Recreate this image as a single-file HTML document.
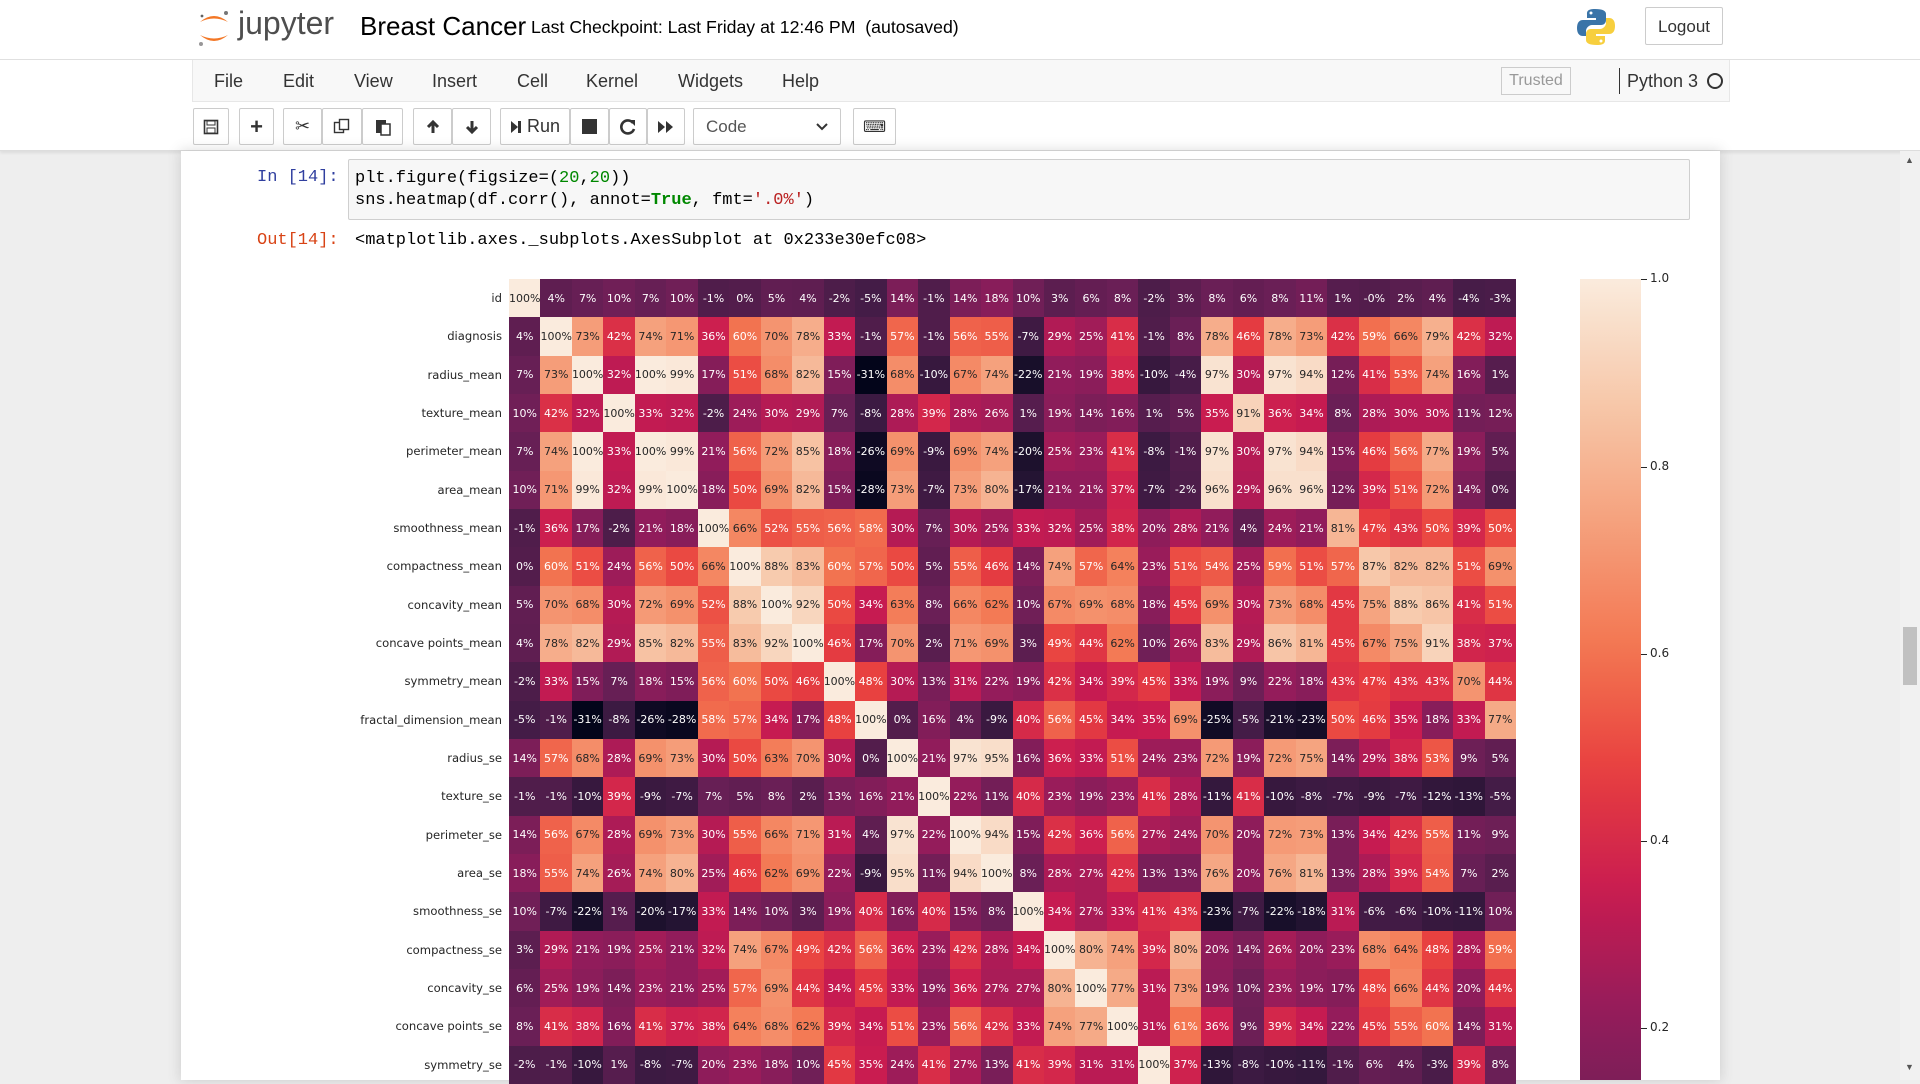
<!DOCTYPE html>
<html><head><meta charset="utf-8"><style>
*{box-sizing:border-box}
body{margin:0;width:1920px;height:1080px;overflow:hidden;background:#eee;font-family:"Liberation Sans",sans-serif;position:relative}
#hdr{position:absolute;left:0;top:0;width:1920px;height:60px;background:#fff;border-bottom:1px solid #e0e0e0}
#menu{position:absolute;left:0;top:60px;width:1920px;height:91px;background:#fff;border-bottom:1px solid #ddd;box-shadow:0 2px 3px rgba(0,0,0,.08)}
#mb{position:absolute;left:192px;top:0;width:1538px;height:42px;background:#f8f8f8;border:1px solid #e7e7e7;border-top:none}
#mb span{position:absolute;top:11px;font-size:18px;color:#333}
.b{position:absolute;top:48px;height:37px;border:1px solid #ccc;border-radius:2px;background:#fff;display:flex;align-items:center;justify-content:center;font-size:18px;color:#333}
#page{position:absolute;left:181px;top:151px;width:1539px;height:929px;background:#fff;box-shadow:0 0 12px 1px rgba(87,87,87,.2)}
.mono{font-family:"Liberation Mono",monospace;font-size:17px}
#hm{position:absolute;left:509px;top:279px;border-collapse:collapse;table-layout:fixed}
#hm td{width:31.47px;height:38.33px;padding:0;text-align:center;font-size:11px;font-family:"DejaVu Sans",sans-serif;white-space:nowrap;overflow:hidden}
#lab{position:absolute;left:300px;top:279px;width:202px;text-align:right;font-family:"DejaVu Sans",sans-serif;font-size:11.6px;color:#262626}
#lab div{height:38.33px;line-height:38.33px}
.tk{position:absolute;left:1641px;width:6px;height:1px;background:#262626}
.tl{position:absolute;left:1650px;font-family:"DejaVu Sans",sans-serif;font-size:12px;color:#262626}
</style></head><body>
<div id="hdr">
<svg style="position:absolute;left:196px;top:8px" width="36" height="40" viewBox="0 0 36 40"><path d="M4 14 Q18 2 32 14 Q18 7 4 14Z" fill="#f37726"/><path d="M4 27 Q18 39 32 27 Q18 34 4 27Z" fill="#f37726"/><circle cx="30" cy="5" r="2" fill="#767677"/><circle cx="5" cy="36" r="2" fill="#989798"/><circle cx="6" cy="8" r="1.4" fill="#616262"/></svg>
<div style="position:absolute;left:238px;top:5px;font-size:32px;color:#4e4e4e">jupyter</div>
<div style="position:absolute;left:360px;top:11px;font-size:26px;color:#000">Breast Cancer</div>
<div style="position:absolute;left:531px;top:17px;font-size:17.7px;color:#000">Last Checkpoint: Last Friday at 12:46 PM &nbsp;(autosaved)</div>
<svg style="position:absolute;left:1576px;top:7px" width="40" height="40" viewBox="0 0 40 40"><path d="M19 2c-8 0-8 3-8 5v4h9v2H7c-4 0-6 3-6 8s2 8 6 8h3v-5c0-3 3-6 6-6h9c3 0 5-2 5-5V7c0-3-3-5-11-5z" fill="#3a74a8"/><circle cx="15" cy="6" r="1.5" fill="#fff"/><path d="M21 38c8 0 8-3 8-5v-4h-9v-2h13c4 0 6-3 6-8s-2-8-6-8h-3v5c0 3-3 6-6 6h-9c-3 0-5 2-5 5v6c0 3 3 5 11 5z" fill="#f7cf3e"/><circle cx="25" cy="34" r="1.5" fill="#fff"/></svg>
<div style="position:absolute;left:1645px;top:7px;width:78px;height:38px;border:1px solid #ccc;border-radius:2px;font-size:17px;line-height:38px;text-align:center;color:#333">Logout</div>
</div>
<div id="menu">
<div id="mb"><span style="left:21px">File</span><span style="left:90px">Edit</span><span style="left:161px">View</span><span style="left:239px">Insert</span><span style="left:324px">Cell</span><span style="left:393px">Kernel</span><span style="left:485px">Widgets</span><span style="left:589px">Help</span>
<div style="position:absolute;left:1308px;top:7px;width:70px;height:28px;border:1px solid #ccc;font-size:16px;color:#999;text-align:center;line-height:26px">Trusted</div>
<div style="position:absolute;left:1426px;top:8px;width:1px;height:26px;background:#333"></div>
<span style="left:1434px">Python 3</span>
<div style="position:absolute;left:1514px;top:13px;width:16px;height:16px;border:2px solid #333;border-radius:50%"></div></div>
<div class="b" style="left:193px;width:36px"><svg width="16" height="16"><rect x="1.5" y="1.5" width="13" height="13" fill="none" stroke="#333" stroke-width="1.6"/><rect x="4" y="2" width="8" height="4" fill="none" stroke="#333"/><rect x="4" y="9" width="8" height="5" fill="none" stroke="#333"/></svg></div>
<div class="b" style="left:239px;width:35px;font-weight:bold;font-size:22px">+</div>
<div class="b" style="left:283px;width:39px;font-size:18px">✂</div>
<div class="b" style="left:322px;width:40px"><svg width="18" height="18"><rect x="1.5" y="4.5" width="9" height="10" fill="#fff" stroke="#333" stroke-width="1.4"/><rect x="6.5" y="1.5" width="9" height="10" fill="#fff" stroke="#333" stroke-width="1.4"/></svg></div>
<div class="b" style="left:362px;width:41px"><svg width="16" height="18"><rect x="1" y="2" width="10" height="13" fill="#333"/><rect x="6" y="6" width="9" height="11" fill="#fff" stroke="#333" stroke-width="1.5"/></svg></div>
<div class="b" style="left:413px;width:39px"><svg width="16" height="16"><path d="M8 14V3M3 8l5-5 5 5" stroke="#333" stroke-width="3" fill="none"/></svg></div>
<div class="b" style="left:452px;width:39px"><svg width="16" height="16"><path d="M8 2v11M3 8l5 5 5-5" stroke="#333" stroke-width="3" fill="none"/></svg></div>
<div class="b" style="left:500px;width:70px"><svg width="12" height="14"><path d="M1 1l7 6-7 6z" fill="#333"/><rect x="8" y="1" width="3" height="12" fill="#333"/></svg>&nbsp;Run</div>
<div class="b" style="left:570px;width:39px"><div style="width:15px;height:15px;background:#333"></div></div>
<div class="b" style="left:609px;width:38px"><svg width="18" height="18"><path d="M14 5A6.5 6.5 0 1 0 15 11" stroke="#333" stroke-width="2.6" fill="none"/><path d="M10 2h6v6z" fill="#333"/></svg></div>
<div class="b" style="left:647px;width:38px"><svg width="18" height="14"><path d="M1 1l7 6-7 6zM9 1l7 6-7 6z" fill="#333"/></svg></div>
<div class="b" style="left:693px;width:148px;justify-content:space-between;padding:0 12px;font-size:17px;color:#555">Code<svg width="12" height="8"><path d="M1 1l5 5 5-5" stroke="#333" stroke-width="2" fill="none"/></svg></div>
<div class="b" style="left:853px;width:43px;font-size:16px">⌨</div>
</div>
<div id="page"></div>
<div style="position:absolute;left:1900px;top:151px;width:20px;height:929px;background:#f1f1f1"></div>
<div style="position:absolute;left:1903px;top:627px;width:14px;height:58px;background:#c1c1c1"></div>
<div style="position:absolute;left:1905px;top:155px;font-size:9px;color:#555">▲</div>
<div style="position:absolute;left:1905px;top:1062px;font-size:9px;color:#555">▼</div>
<div class="mono" style="position:absolute;left:257px;top:168px;color:#303f9f">In [14]:</div>
<div style="position:absolute;left:348px;top:159px;width:1342px;height:61px;background:#f7f7f7;border:1px solid #cfcfcf;border-radius:2px"></div>
<div class="mono" style="position:absolute;left:355px;top:168px;line-height:22px;color:#000;white-space:pre">plt.figure(figsize=(<span style="color:#080">20</span>,<span style="color:#080">20</span>))
sns.heatmap(df.corr(), annot=<b style="color:#080">True</b>, fmt=<span style="color:#ba2121">'.0%'</span>)</div>
<div class="mono" style="position:absolute;left:257px;top:231px;color:#d84315">Out[14]:</div>
<div class="mono" style="position:absolute;left:355px;top:231px;color:#000">&lt;matplotlib.axes._subplots.AxesSubplot at 0x233e30efc08&gt;</div>
<div id="lab"><div>id</div><div>diagnosis</div><div>radius_mean</div><div>texture_mean</div><div>perimeter_mean</div><div>area_mean</div><div>smoothness_mean</div><div>compactness_mean</div><div>concavity_mean</div><div>concave points_mean</div><div>symmetry_mean</div><div>fractal_dimension_mean</div><div>radius_se</div><div>texture_se</div><div>perimeter_se</div><div>area_se</div><div>smoothness_se</div><div>compactness_se</div><div>concavity_se</div><div>concave points_se</div><div>symmetry_se</div></div>
<table id="hm">
<tr><td>100%</td><td>4%</td><td>7%</td><td>10%</td><td>7%</td><td>10%</td><td>-1%</td><td>0%</td><td>5%</td><td>4%</td><td>-2%</td><td>-5%</td><td>14%</td><td>-1%</td><td>14%</td><td>18%</td><td>10%</td><td>3%</td><td>6%</td><td>8%</td><td>-2%</td><td>3%</td><td>8%</td><td>6%</td><td>8%</td><td>11%</td><td>1%</td><td>-0%</td><td>2%</td><td>4%</td><td>-4%</td><td>-3%</td></tr>
<tr><td>4%</td><td>100%</td><td>73%</td><td>42%</td><td>74%</td><td>71%</td><td>36%</td><td>60%</td><td>70%</td><td>78%</td><td>33%</td><td>-1%</td><td>57%</td><td>-1%</td><td>56%</td><td>55%</td><td>-7%</td><td>29%</td><td>25%</td><td>41%</td><td>-1%</td><td>8%</td><td>78%</td><td>46%</td><td>78%</td><td>73%</td><td>42%</td><td>59%</td><td>66%</td><td>79%</td><td>42%</td><td>32%</td></tr>
<tr><td>7%</td><td>73%</td><td>100%</td><td>32%</td><td>100%</td><td>99%</td><td>17%</td><td>51%</td><td>68%</td><td>82%</td><td>15%</td><td>-31%</td><td>68%</td><td>-10%</td><td>67%</td><td>74%</td><td>-22%</td><td>21%</td><td>19%</td><td>38%</td><td>-10%</td><td>-4%</td><td>97%</td><td>30%</td><td>97%</td><td>94%</td><td>12%</td><td>41%</td><td>53%</td><td>74%</td><td>16%</td><td>1%</td></tr>
<tr><td>10%</td><td>42%</td><td>32%</td><td>100%</td><td>33%</td><td>32%</td><td>-2%</td><td>24%</td><td>30%</td><td>29%</td><td>7%</td><td>-8%</td><td>28%</td><td>39%</td><td>28%</td><td>26%</td><td>1%</td><td>19%</td><td>14%</td><td>16%</td><td>1%</td><td>5%</td><td>35%</td><td>91%</td><td>36%</td><td>34%</td><td>8%</td><td>28%</td><td>30%</td><td>30%</td><td>11%</td><td>12%</td></tr>
<tr><td>7%</td><td>74%</td><td>100%</td><td>33%</td><td>100%</td><td>99%</td><td>21%</td><td>56%</td><td>72%</td><td>85%</td><td>18%</td><td>-26%</td><td>69%</td><td>-9%</td><td>69%</td><td>74%</td><td>-20%</td><td>25%</td><td>23%</td><td>41%</td><td>-8%</td><td>-1%</td><td>97%</td><td>30%</td><td>97%</td><td>94%</td><td>15%</td><td>46%</td><td>56%</td><td>77%</td><td>19%</td><td>5%</td></tr>
<tr><td>10%</td><td>71%</td><td>99%</td><td>32%</td><td>99%</td><td>100%</td><td>18%</td><td>50%</td><td>69%</td><td>82%</td><td>15%</td><td>-28%</td><td>73%</td><td>-7%</td><td>73%</td><td>80%</td><td>-17%</td><td>21%</td><td>21%</td><td>37%</td><td>-7%</td><td>-2%</td><td>96%</td><td>29%</td><td>96%</td><td>96%</td><td>12%</td><td>39%</td><td>51%</td><td>72%</td><td>14%</td><td>0%</td></tr>
<tr><td>-1%</td><td>36%</td><td>17%</td><td>-2%</td><td>21%</td><td>18%</td><td>100%</td><td>66%</td><td>52%</td><td>55%</td><td>56%</td><td>58%</td><td>30%</td><td>7%</td><td>30%</td><td>25%</td><td>33%</td><td>32%</td><td>25%</td><td>38%</td><td>20%</td><td>28%</td><td>21%</td><td>4%</td><td>24%</td><td>21%</td><td>81%</td><td>47%</td><td>43%</td><td>50%</td><td>39%</td><td>50%</td></tr>
<tr><td>0%</td><td>60%</td><td>51%</td><td>24%</td><td>56%</td><td>50%</td><td>66%</td><td>100%</td><td>88%</td><td>83%</td><td>60%</td><td>57%</td><td>50%</td><td>5%</td><td>55%</td><td>46%</td><td>14%</td><td>74%</td><td>57%</td><td>64%</td><td>23%</td><td>51%</td><td>54%</td><td>25%</td><td>59%</td><td>51%</td><td>57%</td><td>87%</td><td>82%</td><td>82%</td><td>51%</td><td>69%</td></tr>
<tr><td>5%</td><td>70%</td><td>68%</td><td>30%</td><td>72%</td><td>69%</td><td>52%</td><td>88%</td><td>100%</td><td>92%</td><td>50%</td><td>34%</td><td>63%</td><td>8%</td><td>66%</td><td>62%</td><td>10%</td><td>67%</td><td>69%</td><td>68%</td><td>18%</td><td>45%</td><td>69%</td><td>30%</td><td>73%</td><td>68%</td><td>45%</td><td>75%</td><td>88%</td><td>86%</td><td>41%</td><td>51%</td></tr>
<tr><td>4%</td><td>78%</td><td>82%</td><td>29%</td><td>85%</td><td>82%</td><td>55%</td><td>83%</td><td>92%</td><td>100%</td><td>46%</td><td>17%</td><td>70%</td><td>2%</td><td>71%</td><td>69%</td><td>3%</td><td>49%</td><td>44%</td><td>62%</td><td>10%</td><td>26%</td><td>83%</td><td>29%</td><td>86%</td><td>81%</td><td>45%</td><td>67%</td><td>75%</td><td>91%</td><td>38%</td><td>37%</td></tr>
<tr><td>-2%</td><td>33%</td><td>15%</td><td>7%</td><td>18%</td><td>15%</td><td>56%</td><td>60%</td><td>50%</td><td>46%</td><td>100%</td><td>48%</td><td>30%</td><td>13%</td><td>31%</td><td>22%</td><td>19%</td><td>42%</td><td>34%</td><td>39%</td><td>45%</td><td>33%</td><td>19%</td><td>9%</td><td>22%</td><td>18%</td><td>43%</td><td>47%</td><td>43%</td><td>43%</td><td>70%</td><td>44%</td></tr>
<tr><td>-5%</td><td>-1%</td><td>-31%</td><td>-8%</td><td>-26%</td><td>-28%</td><td>58%</td><td>57%</td><td>34%</td><td>17%</td><td>48%</td><td>100%</td><td>0%</td><td>16%</td><td>4%</td><td>-9%</td><td>40%</td><td>56%</td><td>45%</td><td>34%</td><td>35%</td><td>69%</td><td>-25%</td><td>-5%</td><td>-21%</td><td>-23%</td><td>50%</td><td>46%</td><td>35%</td><td>18%</td><td>33%</td><td>77%</td></tr>
<tr><td>14%</td><td>57%</td><td>68%</td><td>28%</td><td>69%</td><td>73%</td><td>30%</td><td>50%</td><td>63%</td><td>70%</td><td>30%</td><td>0%</td><td>100%</td><td>21%</td><td>97%</td><td>95%</td><td>16%</td><td>36%</td><td>33%</td><td>51%</td><td>24%</td><td>23%</td><td>72%</td><td>19%</td><td>72%</td><td>75%</td><td>14%</td><td>29%</td><td>38%</td><td>53%</td><td>9%</td><td>5%</td></tr>
<tr><td>-1%</td><td>-1%</td><td>-10%</td><td>39%</td><td>-9%</td><td>-7%</td><td>7%</td><td>5%</td><td>8%</td><td>2%</td><td>13%</td><td>16%</td><td>21%</td><td>100%</td><td>22%</td><td>11%</td><td>40%</td><td>23%</td><td>19%</td><td>23%</td><td>41%</td><td>28%</td><td>-11%</td><td>41%</td><td>-10%</td><td>-8%</td><td>-7%</td><td>-9%</td><td>-7%</td><td>-12%</td><td>-13%</td><td>-5%</td></tr>
<tr><td>14%</td><td>56%</td><td>67%</td><td>28%</td><td>69%</td><td>73%</td><td>30%</td><td>55%</td><td>66%</td><td>71%</td><td>31%</td><td>4%</td><td>97%</td><td>22%</td><td>100%</td><td>94%</td><td>15%</td><td>42%</td><td>36%</td><td>56%</td><td>27%</td><td>24%</td><td>70%</td><td>20%</td><td>72%</td><td>73%</td><td>13%</td><td>34%</td><td>42%</td><td>55%</td><td>11%</td><td>9%</td></tr>
<tr><td>18%</td><td>55%</td><td>74%</td><td>26%</td><td>74%</td><td>80%</td><td>25%</td><td>46%</td><td>62%</td><td>69%</td><td>22%</td><td>-9%</td><td>95%</td><td>11%</td><td>94%</td><td>100%</td><td>8%</td><td>28%</td><td>27%</td><td>42%</td><td>13%</td><td>13%</td><td>76%</td><td>20%</td><td>76%</td><td>81%</td><td>13%</td><td>28%</td><td>39%</td><td>54%</td><td>7%</td><td>2%</td></tr>
<tr><td>10%</td><td>-7%</td><td>-22%</td><td>1%</td><td>-20%</td><td>-17%</td><td>33%</td><td>14%</td><td>10%</td><td>3%</td><td>19%</td><td>40%</td><td>16%</td><td>40%</td><td>15%</td><td>8%</td><td>100%</td><td>34%</td><td>27%</td><td>33%</td><td>41%</td><td>43%</td><td>-23%</td><td>-7%</td><td>-22%</td><td>-18%</td><td>31%</td><td>-6%</td><td>-6%</td><td>-10%</td><td>-11%</td><td>10%</td></tr>
<tr><td>3%</td><td>29%</td><td>21%</td><td>19%</td><td>25%</td><td>21%</td><td>32%</td><td>74%</td><td>67%</td><td>49%</td><td>42%</td><td>56%</td><td>36%</td><td>23%</td><td>42%</td><td>28%</td><td>34%</td><td>100%</td><td>80%</td><td>74%</td><td>39%</td><td>80%</td><td>20%</td><td>14%</td><td>26%</td><td>20%</td><td>23%</td><td>68%</td><td>64%</td><td>48%</td><td>28%</td><td>59%</td></tr>
<tr><td>6%</td><td>25%</td><td>19%</td><td>14%</td><td>23%</td><td>21%</td><td>25%</td><td>57%</td><td>69%</td><td>44%</td><td>34%</td><td>45%</td><td>33%</td><td>19%</td><td>36%</td><td>27%</td><td>27%</td><td>80%</td><td>100%</td><td>77%</td><td>31%</td><td>73%</td><td>19%</td><td>10%</td><td>23%</td><td>19%</td><td>17%</td><td>48%</td><td>66%</td><td>44%</td><td>20%</td><td>44%</td></tr>
<tr><td>8%</td><td>41%</td><td>38%</td><td>16%</td><td>41%</td><td>37%</td><td>38%</td><td>64%</td><td>68%</td><td>62%</td><td>39%</td><td>34%</td><td>51%</td><td>23%</td><td>56%</td><td>42%</td><td>33%</td><td>74%</td><td>77%</td><td>100%</td><td>31%</td><td>61%</td><td>36%</td><td>9%</td><td>39%</td><td>34%</td><td>22%</td><td>45%</td><td>55%</td><td>60%</td><td>14%</td><td>31%</td></tr>
<tr><td>-2%</td><td>-1%</td><td>-10%</td><td>1%</td><td>-8%</td><td>-7%</td><td>20%</td><td>23%</td><td>18%</td><td>10%</td><td>45%</td><td>35%</td><td>24%</td><td>41%</td><td>27%</td><td>13%</td><td>41%</td><td>39%</td><td>31%</td><td>31%</td><td>100%</td><td>37%</td><td>-13%</td><td>-8%</td><td>-10%</td><td>-11%</td><td>-1%</td><td>6%</td><td>4%</td><td>-3%</td><td>39%</td><td>8%</td></tr>
</table>
<div id="cb" style="position:absolute;left:1580px;top:279px;width:61px;height:801px"></div>
<div class="tk" style="top:279px"></div><div class="tl" style="top:271px">1.0</div>
<div class="tk" style="top:467px"></div><div class="tl" style="top:459px">0.8</div>
<div class="tk" style="top:654px"></div><div class="tl" style="top:646px">0.6</div>
<div class="tk" style="top:841px"></div><div class="tl" style="top:833px">0.4</div>
<div class="tk" style="top:1028px"></div><div class="tl" style="top:1020px">0.2</div>
<script>
var S=[[0,[3,5,26]],[.1,[34,19,49]],[.2,[69,28,71]],[.3,[107,31,86]],[.4,[146,28,91]],[.5,[200,27,81]],[.6,[232,63,63]],[.7,[243,118,81]],[.8,[245,160,124]],[.9,[247,200,170]],[1,[250,235,221]]];
function cm(t){t=Math.max(0,Math.min(1,t));for(var i=1;i<S.length;i++){if(t<=S[i][0]){var a=S[i-1],b=S[i],f=(t-a[0])/(b[0]-a[0]);return a[1].map(function(v,k){return Math.round(v+(b[1][k]-v)*f)})}}return S[S.length-1][1]}
var vmin=-0.31,vmax=1;function nz(v){return (v-vmin)/(vmax-vmin)}
document.querySelectorAll('#hm td').forEach(function(td){var v=parseInt(td.textContent)/100;var c=cm(nz(v));td.style.background='rgb('+c+')';var L=(0.299*c[0]+0.587*c[1]+0.114*c[2])/255;td.style.color=L>0.6?'#262626':'#fff'});
var st=[];for(var i=0;i<=20;i++){var p=i/20;var v=1-p*(1-0.146);st.push('rgb('+cm(nz(v))+') '+(p*100)+'%')}
document.getElementById('cb').style.background='linear-gradient(to bottom,'+st.join(',')+')';
</script>
</body></html>
